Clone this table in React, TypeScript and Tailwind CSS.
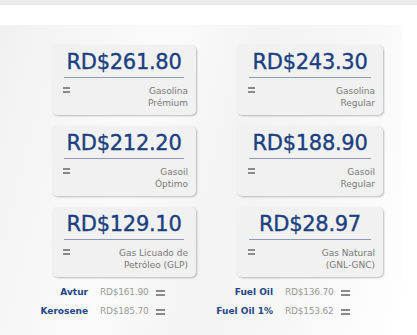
const cards = [
  { price: "RD$261.80", l1: "Gasolina", l2: "Prémium" },
  { price: "RD$243.30", l1: "Gasolina", l2: "Regular" },
  { price: "RD$212.20", l1: "Gasoil", l2: "Óptimo" },
  { price: "RD$188.90", l1: "Gasoil", l2: "Regular" },
  { price: "RD$129.10", l1: "Gas Licuado de", l2: "Petróleo (GLP)" },
  { price: "RD$28.97", l1: "Gas Natural", l2: "(GNL-GNC)" },
];

function Equal({ className }: { className: string }) {
  return (
    <span className={"flex flex-col gap-[2px] " + className}>
      <span className="h-[2px] bg-[#8a8a8a]" />
      <span className="h-[2px] bg-[#8a8a8a]" />
    </span>
  );
}

function Card({ price, l1, l2 }: { price: string; l1: string; l2: string }) {
  return (
    <div className="h-[70px] rounded-[5px] bg-[#f1f1f1] shadow-[1px_1px_2px_rgba(0,0,0,0.25)] px-[8px] pt-[4px]">
      <div className="text-center text-[21px] leading-[26px] text-[#1a4080] font-['DejaVu_Sans',sans-serif] tracking-[-0.3px] [-webkit-text-stroke:0.35px_#1a4080]">
        {price}
      </div>
      <div className="mx-[4px] mt-[2px] h-px bg-[#8e9bb5]" />
      <div className="flex justify-between mt-[7px]">
        <Equal className="w-[7px] mt-[2px] ml-[3px]" />
        <div className="text-right text-[9px] leading-[12px] text-[#7a7a7a] font-['DejaVu_Sans',sans-serif]">
          <div>{l1}</div>
          <div>{l2}</div>
        </div>
      </div>
    </div>
  );
}

function Row({ label, price, w }: { label: string; price: string; w: string }) {
  return (
    <div className="flex items-center h-[19px] text-[9px] font-['DejaVu_Sans',sans-serif] whitespace-nowrap">
      <span className={"flex justify-end " + w}>
        <span className="shrink-0 font-bold text-[#1f4786]">{label}</span>
      </span>
      <span className="ml-[12px] text-[#9a9a9a] tracking-[-0.2px]">{price}</span>
      <Equal className="w-[9px] ml-[7px]" />
    </div>
  );
}

export default function App() {
  return (
    <div className="w-[417px] h-[335px] bg-white overflow-hidden">
      <div className="h-[5px] bg-[#ececec]" />
      <div className="h-[20px]" />
      <div className="w-[402px] h-[310px] bg-[linear-gradient(105deg,#f1f1f1_0%,#fbfbfb_35%,#f3f3f3_55%,#f7f7f7_75%,#ffffff_100%)] pt-[20px]">
        <div className="grid grid-cols-[144px_146px] gap-x-[41px] gap-y-[11px] pl-[52px]">
          {cards.map((c) => (
            <Card key={c.price} {...c} />
          ))}
        </div>
        <div className="flex pl-[41px] mt-[6px]">
          <div className="w-[178px]">
            <Row label="Avtur" price="RD$161.90" w="w-[47px]" />
            <Row label="Kerosene" price="RD$185.70" w="w-[47px]" />
          </div>
          <div>
            <Row label="Fuel Oil" price="RD$136.70" w="w-[54px]" />
            <Row label="Fuel Oil 1%" price="RD$153.62" w="w-[54px]" />
          </div>
        </div>
      </div>
    </div>
  );
}
